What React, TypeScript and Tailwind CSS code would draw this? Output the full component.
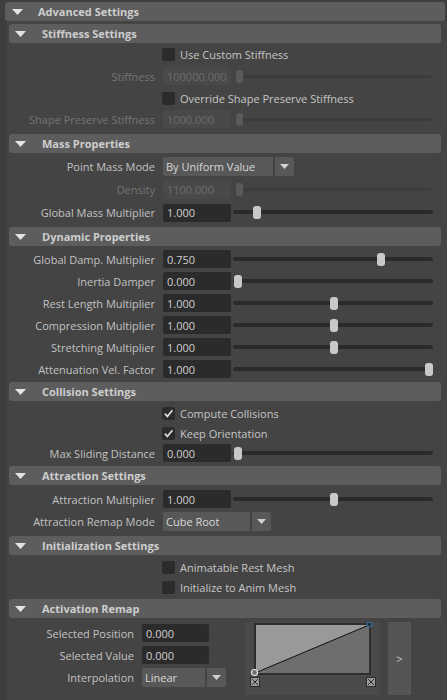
import React from 'react'

const LABEL = 'text-[#c2c2c2]'
const DIM = 'text-[#747474]'

function Tri({ className = '' }: { className?: string }) {
  return (
    <svg width="11" height="6" viewBox="0 0 11 6" className={className}>
      <path d="M0 0H11L5.5 6Z" fill="#e4e4e4" />
    </svg>
  )
}

function Header({ title, outer }: { title: string; outer?: boolean }) {
  return (
    <div className="h-[19px] bg-[#5d5d5d] rounded-[3px] flex items-center">
      <Tri className={outer ? 'ml-[7px]' : 'ml-[6px]'} />
      <span className={`${outer ? 'ml-[15px]' : 'ml-[16px]'} font-bold text-[#cecece]`}>{title}</span>
    </div>
  )
}

function Field({ value, disabled, w = 'w-[68px]' }: { value: string; disabled?: boolean; w?: string }) {
  return (
    <div
      className={`ml-[8px] ${w} h-[18px] rounded-[2px] pl-[4px] flex items-center ${
        disabled ? 'bg-[#494949] text-[#6c6c6c]' : 'bg-[#2b2b2b] text-[#d0d0d0]'
      }`}
    >
      {value}
    </div>
  )
}

function Slider({ frac }: { frac: number }) {
  return (
    <div className="ml-[2px] w-[200px] h-[13px] relative">
      <div className="absolute left-0 right-0 top-[4px] h-[4px] rounded-full bg-[#2a2a2a]" />
      <div className="absolute top-0 w-[8px] h-[13px] rounded-[3px] bg-[#c9c9c9]" style={{ left: 1 + frac * 191 }} />
    </div>
  )
}

function DimSlider() {
  return (
    <div className="ml-[5px] w-[196px] h-[13px] relative">
      <div className="absolute left-[1px] right-0 top-[5px] h-[3px] rounded-full bg-[#3c3c3c]" />
      <div className="absolute left-0 top-0 w-[7px] h-[13px] rounded-[3px] bg-[#5a5a5a]" />
    </div>
  )
}

function SliderRow({ label, value, frac, disabled, h = 'h-[22px]' }: any) {
  return (
    <div className={`${h} flex items-center`}>
      <div className={`w-[146px] text-right ${disabled ? DIM : LABEL}`}>{label}</div>
      <Field value={value} disabled={disabled} />
      {disabled ? <DimSlider /> : <Slider frac={frac} />}
    </div>
  )
}

function CheckRow({ label, checked, h = 'h-[20px]' }: { label: string; checked?: boolean; h?: string }) {
  return (
    <div className={`${h} flex items-center`}>
      <div className="ml-[153px] w-[13px] h-[13px] rounded-[2px] bg-[#2b2b2b] flex items-center justify-center">
        {checked && (
          <svg width="13" height="13" viewBox="0 0 13 13">
            <path d="M2.8 6.6L5.4 9.4L10.4 3.2" stroke="#dadada" strokeWidth="1.7" fill="none" />
          </svg>
        )}
      </div>
      <span className="ml-[5px] text-[#c6c6c6]">{label}</span>
    </div>
  )
}

function Dropdown({ value, textW, ml = 'ml-[8px]' }: { value: string; textW: string; ml?: string }) {
  return (
    <div className={`${ml} flex h-[19px]`}>
      <div className={`${textW} h-full bg-[#585858] rounded-l-[2px] pl-[3px] flex items-center text-[#d8d8d8]`}>{value}</div>
      <div className="ml-[2px] w-[19px] h-full bg-[#585858] rounded-r-[2px] flex items-center justify-center">
        <svg width="9" height="5" viewBox="0 0 9 5">
          <path d="M0 0H9L4.5 5Z" fill="#d0d0d0" />
        </svg>
      </div>
    </div>
  )
}

function DropRow({ label, value, textW, h = 'h-[22px]' }: any) {
  return (
    <div className={`${h} flex items-center`}>
      <div className={`w-[146px] text-right ${LABEL}`}>{label}</div>
      <Dropdown value={value} textW={textW} />
    </div>
  )
}

function RemapGraph() {
  return (
    <svg width="135" height="73" viewBox="0 0 135 73" className="ml-[9px] shrink-0">
      <rect x="0" y="0" width="135" height="73" fill="#4a4a4a" />
      <rect x="9" y="1" width="117" height="52" fill="#2e2e2e" />
      <polygon points="11,3 124,3 11,51" fill="#999999" />
      <polygon points="124,3 124,51 11,51" fill="#6e6e6e" />
      <line x1="10" y1="51" x2="124" y2="3" stroke="#111111" strokeWidth="1" />
      <circle cx="9.5" cy="50.5" r="3" fill="#6e6e6e" stroke="#e8e8e8" strokeWidth="1.2" />
      <circle cx="124.5" cy="2.5" r="2.3" fill="none" stroke="#2f6aa3" strokeWidth="1.2" />
      <rect x="5.5" y="55.5" width="9" height="9" fill="#9a9a9a" stroke="#2a2a2a" />
      <path d="M7 57L13 63M13 57L7 63" stroke="#2a2a2a" strokeWidth="1" />
      <rect x="121.5" y="55.5" width="9" height="9" fill="#9a9a9a" stroke="#2a2a2a" />
      <path d="M123 57L129 63M129 57L123 63" stroke="#2a2a2a" strokeWidth="1" />
    </svg>
  )
}

function SmallRow({ label, children }: { label: string; children: React.ReactNode }) {
  return (
    <div className="h-[22px] flex items-center">
      <div className={`w-[125px] text-right ${LABEL}`}>{label}</div>
      {children}
    </div>
  )
}

export default function App() {
  return (
    <div className="w-[447px] h-[700px] bg-[#3e3e3e] overflow-hidden font-['Open_Sans',sans-serif] text-[11px] leading-none pt-[2px]">
      <div className="ml-[5px] mr-[2px]">
        <Header outer title="Advanced Settings" />
      </div>
      <div className="ml-[7px] h-full bg-[#444444] pl-[2px] pr-[6px] pt-[3px]">
        <Header title="Stiffness Settings" />
        <div className="pt-[1px]">
          <CheckRow label="Use Custom Stiffness" h="h-[21px]" />
          <SliderRow label="Stiffness" value="100000.000" disabled />
          <CheckRow label="Override Shape Preserve Stiffness" h="h-[22px]" />
          <SliderRow label="Shape Preserve Stiffness" value="1000.000" disabled h="h-[20px]" />
        </div>

        <div className="mt-[5px]">
          <Header title="Mass Properties" />
        </div>
        <div className="pt-[2px]">
          <DropRow label="Point Mass Mode" value="By Uniform Value" textW="w-[110px]" h="h-[23px]" />
          <SliderRow label="Density" value="1100.000" disabled h="h-[23px]" />
          <SliderRow label="Global Mass Multiplier" value="1.000" frac={0.1} h="h-[23px]" />
        </div>

        <div className="mt-[3px]">
          <Header title="Dynamic Properties" />
        </div>
        <div className="pt-[2px]">
          <SliderRow label="Global Damp. Multiplier" value="0.750" frac={0.75} />
          <SliderRow label="Inertia Damper" value="0.000" frac={0} />
          <SliderRow label="Rest Length Multiplier" value="1.000" frac={0.5} />
          <SliderRow label="Compression Multiplier" value="1.000" frac={0.5} />
          <SliderRow label="Stretching Multiplier" value="1.000" frac={0.5} />
          <SliderRow label="Attenuation Vel. Factor" value="1.000" frac={1} />
        </div>

        <div className="mt-[2px]">
          <Header title="Collision Settings" />
        </div>
        <div className="pt-[2px]">
          <CheckRow label="Compute Collisions" checked />
          <CheckRow label="Keep Orientation" checked />
          <SliderRow label="Max Sliding Distance" value="0.000" frac={0} h="h-[20px]" />
        </div>

        <div className="mt-[3px]">
          <Header title="Attraction Settings" />
        </div>
        <div className="pt-[3px]">
          <SliderRow label="Attraction Multiplier" value="1.000" frac={0.5} />
          <DropRow label="Attraction Remap Mode" value="Cube Root" textW="w-[87px]" />
        </div>

        <div className="mt-[4px]">
          <Header title="Initialization Settings" />
        </div>
        <div className="pt-[2px]">
          <CheckRow label="Animatable Rest Mesh" />
          <CheckRow label="Initialize to Anim Mesh" />
        </div>

        <div className="mt-[2px]">
          <Header title="Activation Remap" />
        </div>
        <div className="pt-[4px] flex items-start">
          <div className="w-[227px] shrink-0">
            <SmallRow label="Selected Position">
              <Field value="0.000" w="w-[67px]" />
            </SmallRow>
            <SmallRow label="Selected Value">
              <Field value="0.000" w="w-[67px]" />
            </SmallRow>
            <SmallRow label="Interpolation">
              <Dropdown value="Linear" textW="w-[63px]" />
            </SmallRow>
          </div>
          <RemapGraph />
          <div className="ml-[8px] w-[23px] h-[73px] bg-[#555555] flex items-center justify-center text-[#cccccc]">&gt;</div>
        </div>
      </div>
    </div>
  )
}
